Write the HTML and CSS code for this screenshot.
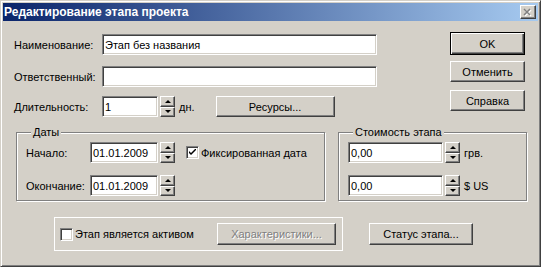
FILE: index.html
```html
<!DOCTYPE html>
<html>

<head>
    <meta charset="utf-8">
    <link rel="stylesheet" href="styles.css">
</head>

<body>
    <div class="window">
        <div class="titlebar">
            <span class="title">Редактирование этапа проекта</span>
            <span class="close">
                <svg width="10" height="9" viewBox="0 0 10 9">
                    <path d="M2 2 L8 8 M8 2 L2 8" stroke="#fff" stroke-width="1.5"/>
                    <path d="M1 1 L7 7 M7 1 L1 7" stroke="#808080" stroke-width="1.5"/>
                </svg>
            </span>
        </div>

        <div class="content">
            <div class="top">
                <div class="fields">
                    <div class="row">
                        <label class="lbl">Наименование:</label>
                        <div class="edit wide">Этап без названия</div>
                    </div>
                    <div class="row second">
                        <label class="lbl">Ответственный:</label>
                        <div class="edit wide"></div>
                    </div>
                    <div class="row third">
                        <label class="lbl">Длительность:</label>
                        <div class="edit days">1</div>
                        <div class="spin"><span class="up"></span><span class="down"></span></div>
                        <span class="unit">дн.</span>
                        <button class="btn resources">Ресурсы...</button>
                    </div>
                </div>

                <div class="buttons">
                    <button class="btn default">OK</button>
                    <button class="btn cancel">Отменить</button>
                    <button class="btn help">Справка</button>
                </div>
            </div>

            <div class="groups">
                <fieldset class="group dates">
                    <legend>Даты</legend>
                    <div class="row">
                        <label class="lbl short">Начало:</label>
                        <div class="edit date">01.01.2009</div>
                        <div class="spin"><span class="up"></span><span class="down"></span></div>
                        <span class="check checked">
                            <svg width="7" height="7" viewBox="0 0 7 7">
                                <path d="M0 2 L0 4 L2 6 L7 1 L7 -1 L2 4 Z" fill="#000"/>
                            </svg>
                        </span>
                        <span class="check-text">Фиксированная дата</span>
                    </div>
                    <div class="row gap">
                        <label class="lbl short">Окончание:</label>
                        <div class="edit date">01.01.2009</div>
                        <div class="spin"><span class="up"></span><span class="down"></span></div>
                    </div>
                </fieldset>

                <fieldset class="group cost">
                    <legend>Стоимость этапа</legend>
                    <div class="row">
                        <div class="edit money">0,00</div>
                        <div class="spin"><span class="up"></span><span class="down"></span></div>
                        <span class="unit">грв.</span>
                    </div>
                    <div class="row gap">
                        <div class="edit money">0,00</div>
                        <div class="spin"><span class="up"></span><span class="down"></span></div>
                        <span class="unit">$ US</span>
                    </div>
                </fieldset>
            </div>

            <div class="bottom">
                <div class="asset">
                    <span class="check"></span>
                    <span class="check-text">Этап является активом</span>
                    <button class="btn disabled traits">Характеристики...</button>
                </div>
                <button class="btn status">Статус этапа...</button>
            </div>
        </div>
    </div>
</body>

</html>
```

FILE: styles.css
```css
* {
    box-sizing: border-box;
}

body {
    margin: 0;
    font-family: "Liberation Sans", Arial, sans-serif;
    font-size: 11px;
    color: #000;
}

.window {
    width: 541px;
    height: 267px;
    background-color: #d4d0c8;
    border: 1px solid;
    border-color: #d4d0c8 #404040 #404040 #d4d0c8;
    box-shadow: inset 1px 1px #fff, inset -1px -1px #808080;
    padding: 2px;
}

.titlebar {
    height: 18px;
    display: flex;
    align-items: center;
    justify-content: space-between;
    background: linear-gradient(to right, #0a246a, #a6caf0);
    padding: 0 2px 0 1px;
}

.title {
    color: #fff;
    font-weight: bold;
    font-size: 12px;
}

.close {
    width: 16px;
    height: 14px;
    background-color: #d4d0c8;
    border: 1px solid;
    border-color: #fff #404040 #404040 #fff;
    box-shadow: inset -1px -1px #808080;
    display: flex;
    align-items: center;
    justify-content: center;
}

.top {
    display: flex;
    justify-content: space-between;
    padding: 0 13px 0 11px;
}

.fields {
    padding-top: 13px;
}

.row {
    display: flex;
    align-items: center;
    height: 21px;
}

.row.second {
    margin-top: 11px;
}

.row.third {
    margin-top: 9px;
}

.lbl {
    width: 88px;
}

.lbl.short {
    width: 64px;
}

.edit {
    height: 21px;
    background-color: #fff;
    border: 1px solid;
    border-color: #808080 #fff #fff #808080;
    box-shadow: inset 1px 1px #404040, inset -1px -1px #d4d0c8;
    padding: 0 2px;
    display: flex;
    align-items: center;
    white-space: nowrap;
}

.edit.wide {
    width: 275px;
}

.edit.days {
    width: 56px;
}

.edit.date {
    width: 68px;
}

.edit.money {
    width: 95px;
}

.spin {
    display: flex;
    flex-direction: column;
    width: 15px;
    height: 21px;
    margin-left: 2px;
}

.spin span {
    flex: 1;
    background-color: #d4d0c8;
    border: 1px solid;
    border-color: #fff #404040 #404040 #fff;
    box-shadow: inset -1px -1px #808080;
    display: flex;
    align-items: center;
    justify-content: center;
}

.spin .up::after {
    content: "";
    border-left: 3px solid transparent;
    border-right: 3px solid transparent;
    border-bottom: 3px solid #000;
}

.spin .down::after {
    content: "";
    border-left: 3px solid transparent;
    border-right: 3px solid transparent;
    border-top: 3px solid #000;
}

.unit {
    margin-left: 4px;
}

.btn {
    font-family: inherit;
    font-size: 11px;
    color: #000;
    background-color: #d4d0c8;
    border: 1px solid;
    border-color: #fff #404040 #404040 #fff;
    box-shadow: inset -1px -1px #808080;
    padding: 0;
    height: 21px;
}

.btn.resources {
    width: 119px;
    margin-left: 21px;
}

.buttons {
    display: flex;
    flex-direction: column;
    padding-top: 11px;
}

.buttons .btn {
    width: 75px;
}

.btn.default {
    height: 23px;
    border-color: #000;
    box-shadow: inset 1px 1px #fff, inset -1px -1px #404040, inset -2px -2px #808080;
}

.btn.cancel {
    margin-top: 6px;
}

.btn.help {
    margin-top: 8px;
}

.groups {
    display: flex;
    gap: 13px;
    padding: 0 11px 0 13px;
    margin-top: 9px;
}

.group {
    margin: 0;
    padding: 3px 0 4px 9px;
    border: 1px solid #808080;
    box-shadow: inset 1px 1px #fff, 1px 1px #fff;
}

.group legend {
    margin-left: 5px;
    padding: 0 2px;
    line-height: 13px;
    background-color: #d4d0c8;
}

.group.dates {
    width: 309px;
}

.group.cost {
    flex: 1;
}

.row.gap {
    margin-top: 12px;
}

.check {
    width: 13px;
    height: 13px;
    background-color: #fff;
    border: 1px solid;
    border-color: #808080 #fff #fff #808080;
    box-shadow: inset 1px 1px #404040, inset -1px -1px #d4d0c8;
    display: flex;
    align-items: center;
    justify-content: center;
}

.dates .check {
    margin-left: 11px;
}

.check-text {
    margin-left: 2px;
    white-space: nowrap;
}

.bottom {
    display: flex;
    align-items: center;
    padding-left: 51px;
    margin-top: 16px;
}

.asset {
    width: 289px;
    height: 34px;
    border: 1px solid #fff;
    display: flex;
    align-items: center;
    padding-left: 5px;
}

.btn.traits {
    width: 119px;
    height: 22px;
    margin-left: auto;
    margin-right: 6px;
}

.btn.disabled {
    color: #808080;
    text-shadow: 1px 1px #fff;
}

.btn.status {
    width: 104px;
    height: 22px;
    margin-left: 26px;
}
```
